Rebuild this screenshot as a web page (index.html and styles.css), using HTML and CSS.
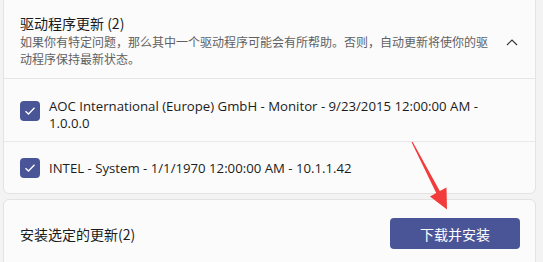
FILE: index.html
```html
<!DOCTYPE html>
<html lang="zh-CN">
<head>
<meta charset="utf-8">
<link rel="stylesheet" href="styles.css">
</head>
<body>
<div class="page">
  <section class="card updates">
    <div class="head">
      <div class="head-text">
        <div class="title">驱动程序更新 (2)</div>
        <div class="desc">如果你有特定问题，那么其中一个驱动程序可能会有所帮助。否则，自动更新将使你的驱动程序保持最新状态。</div>
      </div>
      <svg class="chevron" width="12" height="7" viewBox="0 0 12 7"><path d="M1 6 L6 1 L11 6" fill="none" stroke="#333" stroke-width="1.1"/></svg>
    </div>
    <div class="item item-first">
      <span class="check"><svg width="12" height="10" viewBox="0 0 12 10"><path d="M1.5 5.2 L4.5 8 L10.5 1.8" fill="none" stroke="#fff" stroke-width="1.3"/></svg></span>
      <div class="item-text">AOC International (Europe) GmbH - Monitor - 9/23/2015 12:00:00 AM - 1.0.0.0</div>
    </div>
    <div class="item item-second">
      <span class="check"><svg width="12" height="10" viewBox="0 0 12 10"><path d="M1.5 5.2 L4.5 8 L10.5 1.8" fill="none" stroke="#fff" stroke-width="1.3"/></svg></span>
      <div class="item-text">INTEL - System - 1/1/1970 12:00:00 AM - 10.1.1.42</div>
    </div>
  </section>
  <section class="card install">
    <div class="install-label">安装选定的更新(2)</div>
    <button class="btn">下载并安装</button>
  </section>
  <svg class="arrow" width="543" height="262" viewBox="0 0 543 262"><polygon points="411.6,142.2 412.6,141.8 439.8,191.1 446.5,187.6 447,209.5 430,196.5 436.2,192.9" fill="#f23b3b"/></svg>
</div>
</body>
</html>
```
FILE: styles.css
```css
html, body {
  margin: 0;
  padding: 0;
}
body {
  background: #f3f3f3;
  font-family: "Noto Sans CJK SC", sans-serif;
  overflow: hidden;
}
.page {
  position: relative;
  width: 543px;
  height: 262px;
  padding: 0 7px 0 3px;
  box-sizing: border-box;
  overflow: hidden;
}
.card {
  background: #fbfbfc;
  border: 1px solid #e3e3e3;
  border-radius: 6px;
}
.updates {
  margin-top: -5px;
}
.head {
  display: flex;
  align-items: center;
  padding: 17px 0 11px 16px;
  border-bottom: 1px solid #e6e6e6;
}
.head-text {
  width: 472px;
}
.title {
  font-size: 14px;
  line-height: 20px;
  color: #1b1b1b;
}
.desc {
  font-size: 12px;
  line-height: 17px;
  color: #616161;
}
.chevron {
  margin-left: 14px;
  margin-top: 4px;
}
.item {
  display: flex;
  align-items: flex-start;
  padding-left: 16px;
  font-family: "Open Sans", "Noto Sans CJK SC", sans-serif;
  font-size: 13.2px;
  line-height: 17px;
  color: #1b1b1b;
}
.item-first {
  padding-top: 19px;
  padding-bottom: 9px;
  border-bottom: 1px solid #e9e9e9;
}
.item-first .check {
  margin-top: 3px;
}
.item-second {
  align-items: center;
  padding-top: 16px;
  padding-bottom: 15px;
}
.check {
  flex: none;
  width: 20px;
  height: 20px;
  border-radius: 4px;
  background: #4a5597;
  display: flex;
  align-items: center;
  justify-content: center;
  margin-right: 9px;
}
.item-text {
  width: 445px;
}
.install {
  margin-top: 5px;
  height: 80px;
  display: flex;
  align-items: flex-start;
  justify-content: space-between;
  padding: 18px 15px 0 16px;
}
.install-label {
  font-size: 14px;
  line-height: 20px;
  color: #1b1b1b;
  margin-top: 6px;
}
.btn {
  width: 130px;
  height: 31px;
  border: none;
  border-radius: 4px;
  background: #4a5597;
  color: #fff;
  font-family: "Noto Sans CJK SC", sans-serif;
  font-size: 14px;
  padding: 0;
}
.arrow {
  position: absolute;
  left: 0;
  top: 0;
  pointer-events: none;
}
```
